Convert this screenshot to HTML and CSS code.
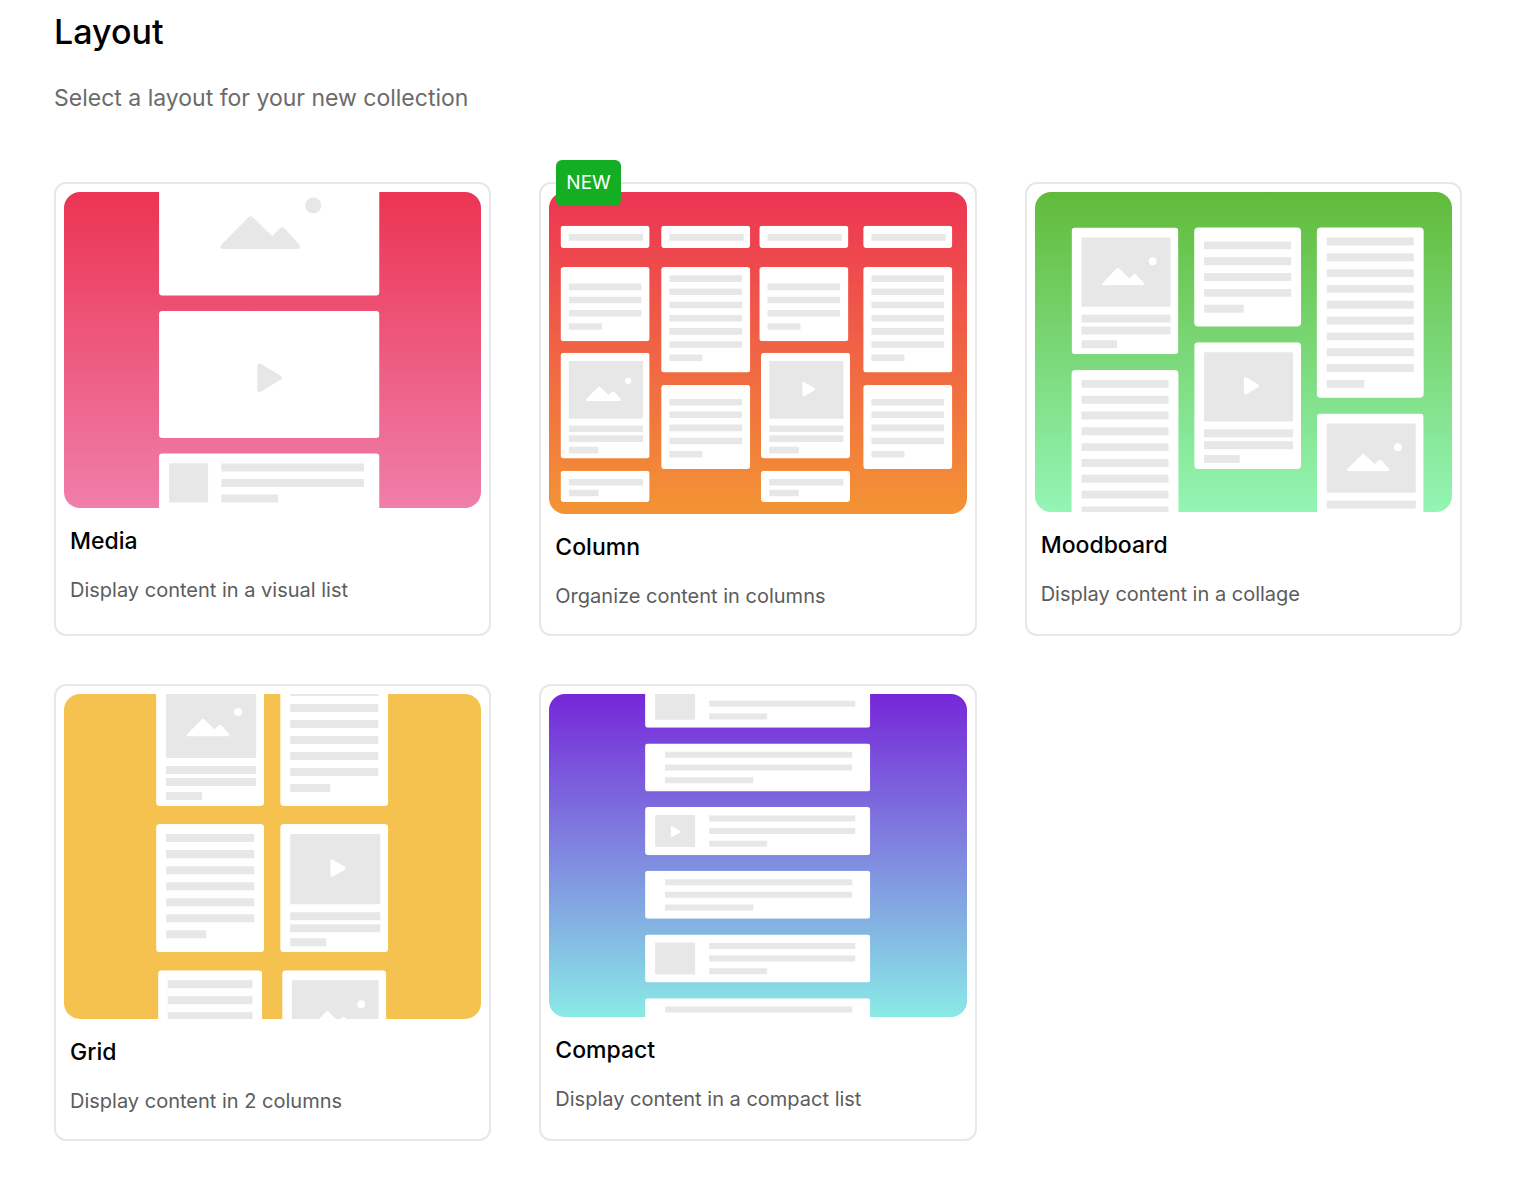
FILE: index.html
```html
<!DOCTYPE html>
<html lang="en">
<head>
    <meta charset="utf-8">
    <title>Layout</title>
    <link rel="stylesheet" href="styles.css">
</head>
<body>
    <!-- shapes shared by the previews -->
    <svg class="shapes" aria-hidden="true">
        <symbol id="mountains" viewBox="0 0 80 33">
            <path d="M2 33Q-1 32 1 29L28 1.500Q30.500-1 33 1.500L52 20L59.500 12.500Q62 10.500 64.500 12.500L79 28.500Q81 32 78 33Z"/>
        </symbol>
        <symbol id="play" viewBox="0 0 25 29">
            <path d="M0 2.500Q.5-.5 3.500.5L23.500 12.500Q26 14.500 23.500 16.500L3.500 28.500Q.5 29.500 0 26.500Z"/>
        </symbol>
        <symbol id="image-card" viewBox="0 0 108 128">
            <rect class="paper" width="108" height="128" rx="4"/>
            <rect class="ink" x="10" y="10" width="90" height="70" rx="1"/>
            <use class="paper" href="#mountains" x="30.500" y="40.500" width="43" height="18"/>
            <circle class="paper" cx="82" cy="34" r="4"/>
            <path class="lines" d="M10 92h90M10 104h90M10 118h36"/>
        </symbol>
        <symbol id="video-card" viewBox="0 0 108 128">
            <rect class="paper" width="108" height="128" rx="4"/>
            <rect class="ink" x="10" y="10" width="90" height="70" rx="1"/>
            <use class="paper" href="#play" x="49.500" y="35" width="17" height="18"/>
            <path class="lines" d="M10 92h90M10 104h90M10 118h36"/>
        </symbol>
        <symbol id="text-card" viewBox="0 0 108 128">
            <rect class="paper" width="108" height="128" rx="4"/>
            <path class="lines" d="M10 14h88M10 30h88M10 46h88M10 62h88M10 78h88M10 94h88M10 110h40"/>
        </symbol>
        <symbol id="title-card" viewBox="0 0 108 27">
            <rect class="paper" width="108" height="27" rx="4"/>
            <path class="lines" d="M10 14h90"/>
        </symbol>
        <symbol id="note-card" viewBox="0 0 108 90">
            <rect class="paper" width="108" height="90" rx="4"/>
            <path class="lines" d="M10 24h88M10 40h88M10 56h88M10 72h40"/>
        </symbol>
        <symbol id="memo-card" viewBox="0 0 108 102">
            <rect class="paper" width="108" height="102" rx="4"/>
            <path class="lines" d="M10 21h88M10 36h88M10 52h88M10 68h88M10 84h40"/>
        </symbol>
        <symbol id="short-card" viewBox="0 0 108 38">
            <rect class="paper" width="108" height="38" rx="4"/>
            <path class="lines" d="M10 14h90M10 27h36"/>
        </symbol>
        <symbol id="text-row" viewBox="0 0 225 48">
            <rect class="paper" width="225" height="48" rx="3"/>
            <path class="lines thin" d="M20 11.300h187M20 24h187M20 36.700h88"/>
        </symbol>
        <symbol id="thumb-row" viewBox="0 0 225 48">
            <rect class="paper" width="225" height="48" rx="3"/>
            <rect class="ink" x="10" y="8" width="40" height="32" rx="1"/>
            <path class="lines thin" d="M64 11.300h146M64 24h146M64 36.700h58"/>
        </symbol>
    </svg>

    <main class="page">
        <h1>Layout</h1>
        <p class="intro">Select a layout for your new collection</p>

        <div class="layouts">
            <button type="button" class="card">
                <svg class="preview media" viewBox="0 0 417 316" aria-hidden="true">
                    <rect class="paper" x="95" y="-10" width="220" height="113.500" rx="3"/>
                    <use class="ink" href="#mountains" x="156" y="24" width="80" height="33"/>
                    <circle class="ink" cx="249" cy="13.500" r="8"/>
                    <rect class="paper" x="95" y="119" width="220" height="126.700" rx="3"/>
                    <use class="ink" href="#play" x="193" y="171" width="25" height="29"/>
                    <rect class="paper" x="95" y="261.300" width="220" height="70" rx="3"/>
                    <rect class="ink" x="105" y="271" width="39" height="39.300" rx="1"/>
                    <path class="lines" d="M157.300 275.200h142.500M157.300 290.700h142.500M157.300 306.200h56.700"/>
                </svg>
                <span class="name">Media</span>
                <span class="about">Display content in a visual list</span>
            </button>

            <button type="button" class="card">
                <span class="badge">NEW</span>
                <svg class="preview column" viewBox="0 0 506 391" aria-hidden="true">
                    <use href="#title-card" x="14" y="41" width="108" height="27"/>
                    <use href="#title-card" x="136" y="41" width="108" height="27"/>
                    <use href="#title-card" x="255" y="41" width="108" height="27"/>
                    <use href="#title-card" x="381" y="41" width="108" height="27"/>

                    <use href="#note-card" x="14" y="91" width="108" height="90"/>
                    <use href="#image-card" x="14" y="195" width="108" height="128"/>
                    <use href="#short-card" x="14" y="338" width="108" height="38"/>

                    <use href="#text-card" x="136" y="91" width="108" height="128"/>
                    <use href="#memo-card" x="136" y="234" width="108" height="102"/>

                    <use href="#note-card" x="255" y="91" width="108" height="90"/>
                    <use href="#video-card" x="257" y="195" width="108" height="128"/>
                    <use href="#short-card" x="257" y="338" width="108" height="38"/>

                    <use href="#text-card" x="381" y="91" width="108" height="128"/>
                    <use href="#memo-card" x="381" y="234" width="108" height="102"/>
                </svg>
                <span class="name">Column</span>
                <span class="about">Organize content in columns</span>
            </button>

            <button type="button" class="card">
                <svg class="preview moodboard" viewBox="1 0 422 324" aria-hidden="true">
                    <use href="#image-card" x="38" y="36" width="108" height="128"/>
                    <rect class="paper" x="38" y="180" width="108" height="160" rx="4"/>
                    <path class="lines" d="M48 194h88M48 210h88M48 226h88M48 242h88M48 258h88M48 274h88M48 290h88M48 306h88M48 322h88"/>

                    <rect class="paper" x="162" y="36" width="108" height="100" rx="4"/>
                    <path class="lines" d="M172 54h88M172 70h88M172 86h88M172 102h88M172 118h40"/>
                    <use href="#video-card" x="162" y="152" width="108" height="128"/>

                    <rect class="paper" x="286" y="36" width="108" height="172" rx="4"/>
                    <path class="lines" d="M296 50h88M296 66h88M296 82h88M296 98h88M296 114h88M296 130h88M296 146h88M296 162h88M296 178h88M296 194h38"/>
                    <use href="#image-card" x="286" y="224" width="108" height="128"/>
                </svg>
                <span class="name">Moodboard</span>
                <span class="about">Display content in a collage</span>
            </button>

            <button type="button" class="card">
                <svg class="preview grid" viewBox="0 0 417 324" aria-hidden="true">
                    <use href="#image-card" x="92" y="-16" width="108" height="128"/>
                    <use href="#text-card" x="216" y="-16" width="108" height="128"/>
                    <use href="#text-card" x="92" y="130" width="108" height="128"/>
                    <use href="#video-card" x="216" y="130" width="108" height="128"/>
                    <!-- last row is a little narrower -->
                    <use href="#text-card" width="108" height="128" transform="translate(94 276) scale(.963 1)"/>
                    <use href="#image-card" width="108" height="128" transform="translate(218 276) scale(.963 1)"/>
                </svg>
                <span class="name">Grid</span>
                <span class="about">Display content in 2 columns</span>
            </button>

            <button type="button" class="card">
                <svg class="preview compact" viewBox="0 0 417 322" aria-hidden="true">
                    <use href="#thumb-row" x="96" y="-14.300" width="225" height="48"/>
                    <use href="#text-row" x="96" y="49.400" width="225" height="48"/>
                    <use href="#thumb-row" x="96" y="113" width="225" height="48"/>
                    <use class="paper" href="#play" x="121.500" y="131.500" width="10" height="12"/>
                    <use href="#text-row" x="96" y="176.700" width="225" height="48"/>
                    <use href="#thumb-row" x="96" y="240.400" width="225" height="48"/>
                    <use href="#text-row" x="96" y="304" width="225" height="48"/>
                </svg>
                <span class="name">Compact</span>
                <span class="about">Display content in a compact list</span>
            </button>
        </div>
    </main>
</body>
</html>
```

FILE: styles.css
```css
body {
    margin: 0;
    background: #fff;
    color: #000;
    font-family: Inter, "Liberation Sans", sans-serif;
}
.shapes {
    position: absolute;
    width: 0;
    height: 0;
}
.page {
    padding: 8px 62px 42px 54px;
}
h1 {
    margin: 0;
    font-size: 34px;
    font-weight: 500;
    line-height: 48px;
}
.intro {
    margin: 26px 0 68px;
    color: #6b6b6b;
    font-size: 23px;
    line-height: 32px;
}
.layouts {
    display: grid;
    grid-template-columns: repeat(3, 1fr);
    gap: 48px;
}
.card {
    position: relative;
    display: flex;
    flex-direction: column;
    justify-content: flex-start;
    padding: 8px 8px 22px;
    border: 2px solid #e7e7e7;
    border-radius: 12px;
    background: #fff;
    color: #000;
    font: inherit;
    text-align: left;
    cursor: pointer;
}
.card:hover {
    border-color: #c8c8c8;
}
.badge {
    position: absolute;
    top: -24px;
    left: 15px;
    padding: 0 10px;
    border-radius: 6px;
    background: #13ae23;
    color: #fff;
    font-size: 19px;
    line-height: 46px;
}
.name {
    margin: 17px 6px;
    font-size: 23px;
    font-weight: 500;
    line-height: 32px;
}
.about {
    margin: 0 6px;
    color: #5c5c5c;
    font-size: 20px;
    line-height: 32px;
}

/* previews */
.preview {
    display: block;
    width: 100%;
    height: auto;
    border-radius: 16px;
    overflow: hidden;
}
.media {
    background: linear-gradient(#ec3453, #ef7faa);
}
.column {
    background: linear-gradient(#ed3454, #f39434);
}
.moodboard {
    background: linear-gradient(#61bb3a, #94f5b5);
}
.grid {
    background: #f5c24f;
}
.compact {
    background: linear-gradient(#7627d9, #89eae6);
}
.paper {
    fill: #fff;
}
.ink {
    fill: #e7e7e7;
}
.lines {
    fill: none;
    stroke: #e7e7e7;
    stroke-width: 8px;
}
.thin {
    stroke-width: 6px;
}
```
